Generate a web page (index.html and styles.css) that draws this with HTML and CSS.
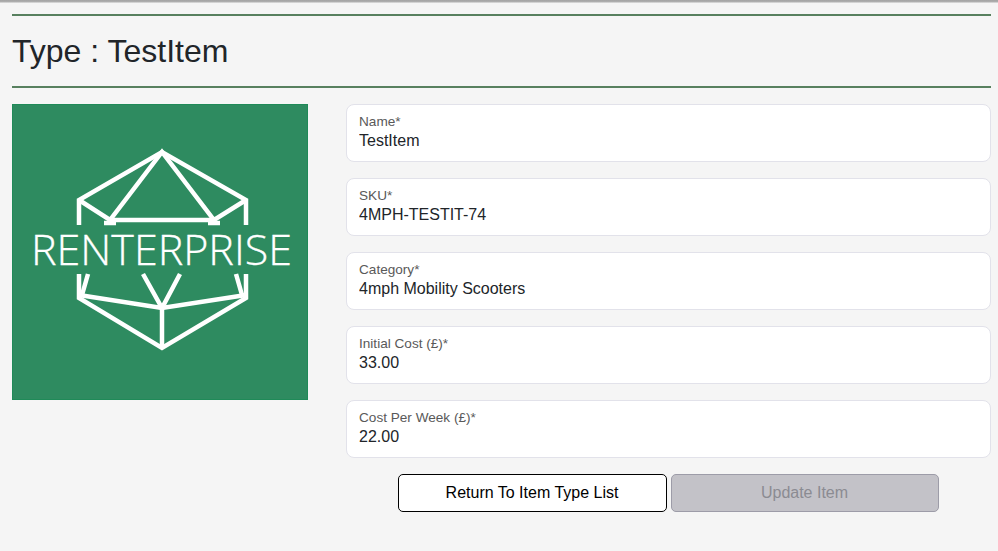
FILE: index.html
```html
<!DOCTYPE html>
<html lang="en">
<head>
    <meta charset="UTF-8">
    <meta name="viewport" content="width=device-width, initial-scale=1.0">
    <title>Type : TestItem</title>
    <link rel="stylesheet" href="styles.css">
</head>
<body>
    <main class="page">
        <header class="page-header">
            <h1>Type : TestItem</h1>
        </header>

        <section class="item-layout">
            <div class="logo-box">
                <svg class="logo" viewBox="0 0 296 296" role="img" aria-label="Renterprise logo">
                    <g class="logo-lines">
                        <path d="M67 121 V96 L150 48 L234 96 V121"/>
                        <path d="M67 96 L98 116 L150 48 L202 116 L234 96"/>
                        <path d="M98 116 H202"/>
                        <path d="M92 119 H104 M196 119 H208"/>
                        <path d="M67 170 V194 L150 244 L234 194 V170"/>
                        <path d="M76 170 L70 191 M224 170 L230 191"/>
                        <path d="M67 191 L150 204 L234 191"/>
                        <path d="M131 170 L150 204 L168 170"/>
                        <path d="M150 204 V244"/>
                    </g>
                    <text class="logo-text" x="19" y="160.5" textLength="261" lengthAdjust="spacingAndGlyphs">RENTERPRISE</text>
                </svg>
            </div>

            <form class="item-form">
                <label class="field">
                    <span class="field-label">Name*</span>
                    <input class="field-input" type="text" value="TestItem">
                </label>
                <label class="field">
                    <span class="field-label">SKU*</span>
                    <input class="field-input" type="text" value="4MPH-TESTIT-74">
                </label>
                <label class="field">
                    <span class="field-label">Category*</span>
                    <input class="field-input" type="text" value="4mph Mobility Scooters">
                </label>
                <label class="field">
                    <span class="field-label">Initial Cost (£)*</span>
                    <input class="field-input" type="text" value="33.00">
                </label>
                <label class="field">
                    <span class="field-label">Cost Per Week (£)*</span>
                    <input class="field-input" type="text" value="22.00">
                </label>

                <div class="form-actions">
                    <button class="btn btn-return" type="button">Return To Item Type List</button>
                    <button class="btn btn-update" type="submit" disabled>Update Item</button>
                </div>
            </form>
        </section>
    </main>
</body>
</html>
```

FILE: styles.css
```css
body {
    margin: 0;
    min-height: 551px;
    box-sizing: border-box;
    background: linear-gradient(#a3a3a3, #b0b0b0 2px, #f5f5f5 3px);
    color: #212529;
    font-family: 'Liberation Sans', Arial, sans-serif;
}

.page {
    padding: 14px 7px 0 12px;
}

.page-header {
    border-top: 2px solid #58805f;
    border-bottom: 2px solid #58805f;
    height: 70px;
    display: flex;
    align-items: center;
}

h1 {
    margin: 0;
    font-size: 32px;
    font-weight: 400;
    line-height: 38px;
}

.item-layout {
    margin-top: 16px;
    display: flex;
    gap: 38px;
    align-items: flex-start;
}

.logo-box {
    flex: none;
    width: 296px;
    height: 296px;
    background: #2e8b60;
    box-shadow: inset 0 0 0 1px #1f8a58;
}

.logo {
    display: block;
    width: 100%;
    height: 100%;
}

.logo-lines path {
    fill: none;
    stroke: #ffffff;
    stroke-width: 4.5;
}

.logo-text {
    fill: #ffffff;
    stroke: #ffffff;
    stroke-width: 0.3;
    font-family: 'Open Sans', sans-serif;
    font-size: 42px;
    font-weight: 300;
}

.item-form {
    flex: 1;
    display: flex;
    flex-direction: column;
    gap: 16px;
}

.field {
    display: flex;
    flex-direction: column;
    box-sizing: border-box;
    height: 58px;
    padding: 9px 12px 0;
    background: #ffffff;
    border: 1px solid #e2e2ea;
    border-radius: 8px;
}

.field-label {
    font-size: 13.6px;
    line-height: 16px;
    color: #595959;
}

.field-input {
    border: none;
    outline: none;
    padding: 0;
    margin-top: 1px;
    background: transparent;
    color: #212529;
    font-family: inherit;
    font-size: 16px;
    line-height: 20px;
}

.form-actions {
    display: flex;
    justify-content: center;
    gap: 4px;
    padding-right: 1px;
}

.btn {
    width: 269px;
    height: 38px;
    border-radius: 5px;
    font-family: inherit;
    font-size: 16px;
    padding: 0;
}

.btn-return {
    background: #ffffff;
    border: 1px solid #000000;
    color: #000000;
    cursor: pointer;
}

.btn-update {
    width: 268px;
    background: #c3c2c8;
    border: 1px solid #9d9ca8;
    color: #8b8b92;
}
```
